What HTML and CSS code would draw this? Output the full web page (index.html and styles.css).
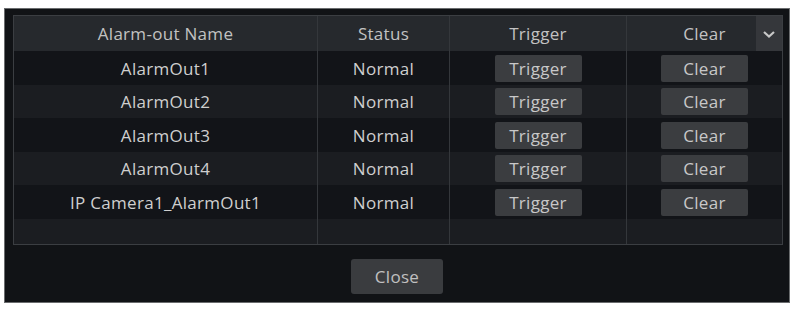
FILE: index.html
```html
<!DOCTYPE html>
<html>
<head>
<meta charset="utf-8">
<link rel="stylesheet" href="styles.css">
</head>
<body>
<div class="panel">
  <div class="table">
    <div class="row head">
      <div class="cell">Alarm-out Name</div>
      <div class="cell">Status</div>
      <div class="cell">Trigger</div>
      <div class="cell last">Clear
        <div class="drop"><svg width="14" height="10" viewBox="0 0 14 10"><path d="M2 3 L7 7.5 L12 3" fill="none" stroke="#c8c8c8" stroke-width="2.2"/></svg></div>
      </div>
    </div>
    <div class="row odd r34">
      <div class="cell">AlarmOut1</div>
      <div class="cell">Normal</div>
      <div class="cell"><span class="btn">Trigger</span></div>
      <div class="cell last"><span class="btn">Clear</span></div>
    </div>
    <div class="row even r33">
      <div class="cell">AlarmOut2</div>
      <div class="cell">Normal</div>
      <div class="cell"><span class="btn">Trigger</span></div>
      <div class="cell last"><span class="btn">Clear</span></div>
    </div>
    <div class="row odd r34">
      <div class="cell">AlarmOut3</div>
      <div class="cell">Normal</div>
      <div class="cell"><span class="btn">Trigger</span></div>
      <div class="cell last"><span class="btn">Clear</span></div>
    </div>
    <div class="row even r33">
      <div class="cell">AlarmOut4</div>
      <div class="cell">Normal</div>
      <div class="cell"><span class="btn">Trigger</span></div>
      <div class="cell last"><span class="btn">Clear</span></div>
    </div>
    <div class="row odd r34">
      <div class="cell">IP Camera1_AlarmOut1</div>
      <div class="cell">Normal</div>
      <div class="cell"><span class="btn">Trigger</span></div>
      <div class="cell last"><span class="btn">Clear</span></div>
    </div>
    <div class="row even fill">
      <div class="cell"></div>
      <div class="cell"></div>
      <div class="cell"></div>
      <div class="cell last"></div>
    </div>
  </div>
  <div class="footer">
    <span class="close">Close</span>
  </div>
</div>
</body>
</html>
```
FILE: styles.css
```css
html, body {
  margin: 0;
  padding: 0;
  background: #ffffff;
}
body {
  padding: 8px 0 0 4px;
  font-family: "Open Sans", "DejaVu Sans", sans-serif;
  font-size: 17px;
  letter-spacing: 0.3px;
  color: #cfcfcf;
}
.panel {
  background: #111316;
  border: 1px solid #6a6c6e;
  padding: 6px 0 0 8px;
  box-sizing: border-box;
  width: 786px;
  height: 295px;
  display: flex;
  flex-direction: column;
}
.table {
  width: 770px;
  border: 1px solid #3b3e42;
  box-sizing: border-box;
}
.row {
  display: grid;
  grid-template-columns: 304px 132px 177px 155px;
}
.cell {
  display: flex;
  align-items: center;
  justify-content: center;
  border-right: 1px solid #34373b;
  position: relative;
  white-space: nowrap;
}
.cell.last {
  border-right: none;
}
.head {
  height: 35px;
  background: #26292d;
  color: #c2c2c2;
}
.r34 { height: 34px; }
.r33 { height: 33px; }
.fill { height: 25px; }
.odd { background: #121418; }
.even { background: #1b1d21; }
.btn {
  width: 87px;
  height: 27px;
  background: #3b3d40;
  border-radius: 2px;
  display: flex;
  align-items: center;
  justify-content: center;
  color: #c8c8c8;
}
.drop {
  position: absolute;
  right: 0;
  top: 0;
  width: 26px;
  height: 35px;
  background: #35373b;
  display: flex;
  align-items: center;
  justify-content: center;
}
.footer {
  display: flex;
  justify-content: center;
  padding-top: 14px;
  padding-right: 8px;
}
.close {
  width: 92px;
  height: 35px;
  background: #3a3c3f;
  border-radius: 3px;
  display: flex;
  align-items: center;
  justify-content: center;
  color: #c0c0c0;
}
```
